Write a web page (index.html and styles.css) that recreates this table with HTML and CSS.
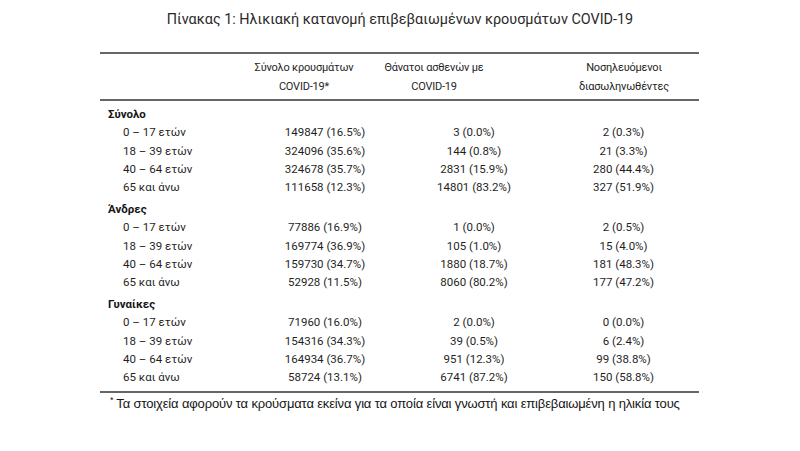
FILE: index.html
```html
<!DOCTYPE html>
<html lang="el">
<head>
<meta charset="utf-8">
<title>Πίνακας 1</title>
<link rel="stylesheet" href="styles.css">
</head>
<body>
<div class="page">
  <h1 class="title">Πίνακας 1: Ηλικιακή κατανομή επιβεβαιωμένων κρουσμάτων COVID-19</h1>
  <div class="table">
    <div class="head">
      <div class="cell label"></div>
      <div class="cell">Σύνολο κρουσμάτων<br>COVID-19*</div>
      <div class="cell">Θάνατοι ασθενών με<br>COVID-19</div>
      <div class="cell last">Νοσηλευόμενοι<br>διασωληνωθέντες</div>
    </div>
    <div class="body">
      <div class="section">
        <div class="row sec"><div class="cell label">Σύνολο</div></div>
        <div class="row"><div class="cell label sub">0 – 17 ετών</div><div class="cell">149847 (16.5%)</div><div class="cell">3 (0.0%)</div><div class="cell">2 (0.3%)</div></div>
        <div class="row"><div class="cell label sub">18 – 39 ετών</div><div class="cell">324096 (35.6%)</div><div class="cell">144 (0.8%)</div><div class="cell">21 (3.3%)</div></div>
        <div class="row"><div class="cell label sub">40 – 64 ετών</div><div class="cell">324678 (35.7%)</div><div class="cell">2831 (15.9%)</div><div class="cell">280 (44.4%)</div></div>
        <div class="row"><div class="cell label sub">65 και άνω</div><div class="cell">111658 (12.3%)</div><div class="cell">14801 (83.2%)</div><div class="cell">327 (51.9%)</div></div>
      </div>
      <div class="section">
        <div class="row sec"><div class="cell label">Άνδρες</div></div>
        <div class="row"><div class="cell label sub">0 – 17 ετών</div><div class="cell">77886 (16.9%)</div><div class="cell">1 (0.0%)</div><div class="cell">2 (0.5%)</div></div>
        <div class="row"><div class="cell label sub">18 – 39 ετών</div><div class="cell">169774 (36.9%)</div><div class="cell">105 (1.0%)</div><div class="cell">15 (4.0%)</div></div>
        <div class="row"><div class="cell label sub">40 – 64 ετών</div><div class="cell">159730 (34.7%)</div><div class="cell">1880 (18.7%)</div><div class="cell">181 (48.3%)</div></div>
        <div class="row"><div class="cell label sub">65 και άνω</div><div class="cell">52928 (11.5%)</div><div class="cell">8060 (80.2%)</div><div class="cell">177 (47.2%)</div></div>
      </div>
      <div class="section">
        <div class="row sec"><div class="cell label">Γυναίκες</div></div>
        <div class="row"><div class="cell label sub">0 – 17 ετών</div><div class="cell">71960 (16.0%)</div><div class="cell">2 (0.0%)</div><div class="cell">0 (0.0%)</div></div>
        <div class="row"><div class="cell label sub">18 – 39 ετών</div><div class="cell">154316 (34.3%)</div><div class="cell">39 (0.5%)</div><div class="cell">6 (2.4%)</div></div>
        <div class="row"><div class="cell label sub">40 – 64 ετών</div><div class="cell">164934 (36.7%)</div><div class="cell">951 (12.3%)</div><div class="cell">99 (38.8%)</div></div>
        <div class="row"><div class="cell label sub">65 και άνω</div><div class="cell">58724 (13.1%)</div><div class="cell">6741 (87.2%)</div><div class="cell">150 (58.8%)</div></div>
      </div>
    </div>
  </div>
  <p class="note"><sup class="star">*</sup>Τα στοιχεία αφορούν τα κρούσματα εκείνα για τα οποία είναι γνωστή και επιβεβαιωμένη η ηλικία τους</p>
</div>
</body>
</html>
```
FILE: styles.css
```css
html, body {
  margin: 0;
  padding: 0;
  background: #ffffff;
}
.page {
  width: 800px;
  height: 451px;
  padding-top: 10px;
  box-sizing: border-box;
  font-family: Roboto, "Noto Sans", sans-serif;
  color: #1f1f1f;
}
.title {
  margin: 0;
  font-size: 14.4px;
  font-weight: normal;
  line-height: 20px;
  text-align: center;
  color: #2a2a2a;
}
.table {
  margin: 22px 0 0 100px;
  width: 599px;
  border-top: 2px solid #666;
  border-bottom: 2px solid #666;
  font-size: 11.5px;
}
.head, .row {
  display: grid;
}
.head {
  grid-template-columns: 134px 140px 120px 205px;
  padding: 4px 0 3px;
  line-height: 19px;
  font-size: 11px;
  letter-spacing: -0.2px;
  border-bottom: 2px solid #666;
}
.head .cell.last {
  padding-left: 55px;
}
.row {
  grid-template-columns: 150px 150px 148px 151px;
  line-height: 18.3px;
}
.cell {
  text-align: center;
  white-space: nowrap;
}
.cell.label {
  text-align: left;
  padding-left: 8px;
}
.cell.label.sub {
  padding-left: 23px;
}
.body {
  padding: 4px 0 5px;
}
.section + .section {
  margin-top: 3.5px;
}
.row.sec .cell {
  font-weight: bold;
  color: #151515;
}
.note {
  margin: 3px 0 0 110px;
  font-family: "Liberation Sans", Arial, sans-serif;
  font-size: 13px;
  letter-spacing: -0.15px;
  line-height: 16px;
  color: #151515;
}
.star {
  font-size: 9px;
  vertical-align: 5px;
  line-height: 0;
  margin-right: 3px;
}
```
